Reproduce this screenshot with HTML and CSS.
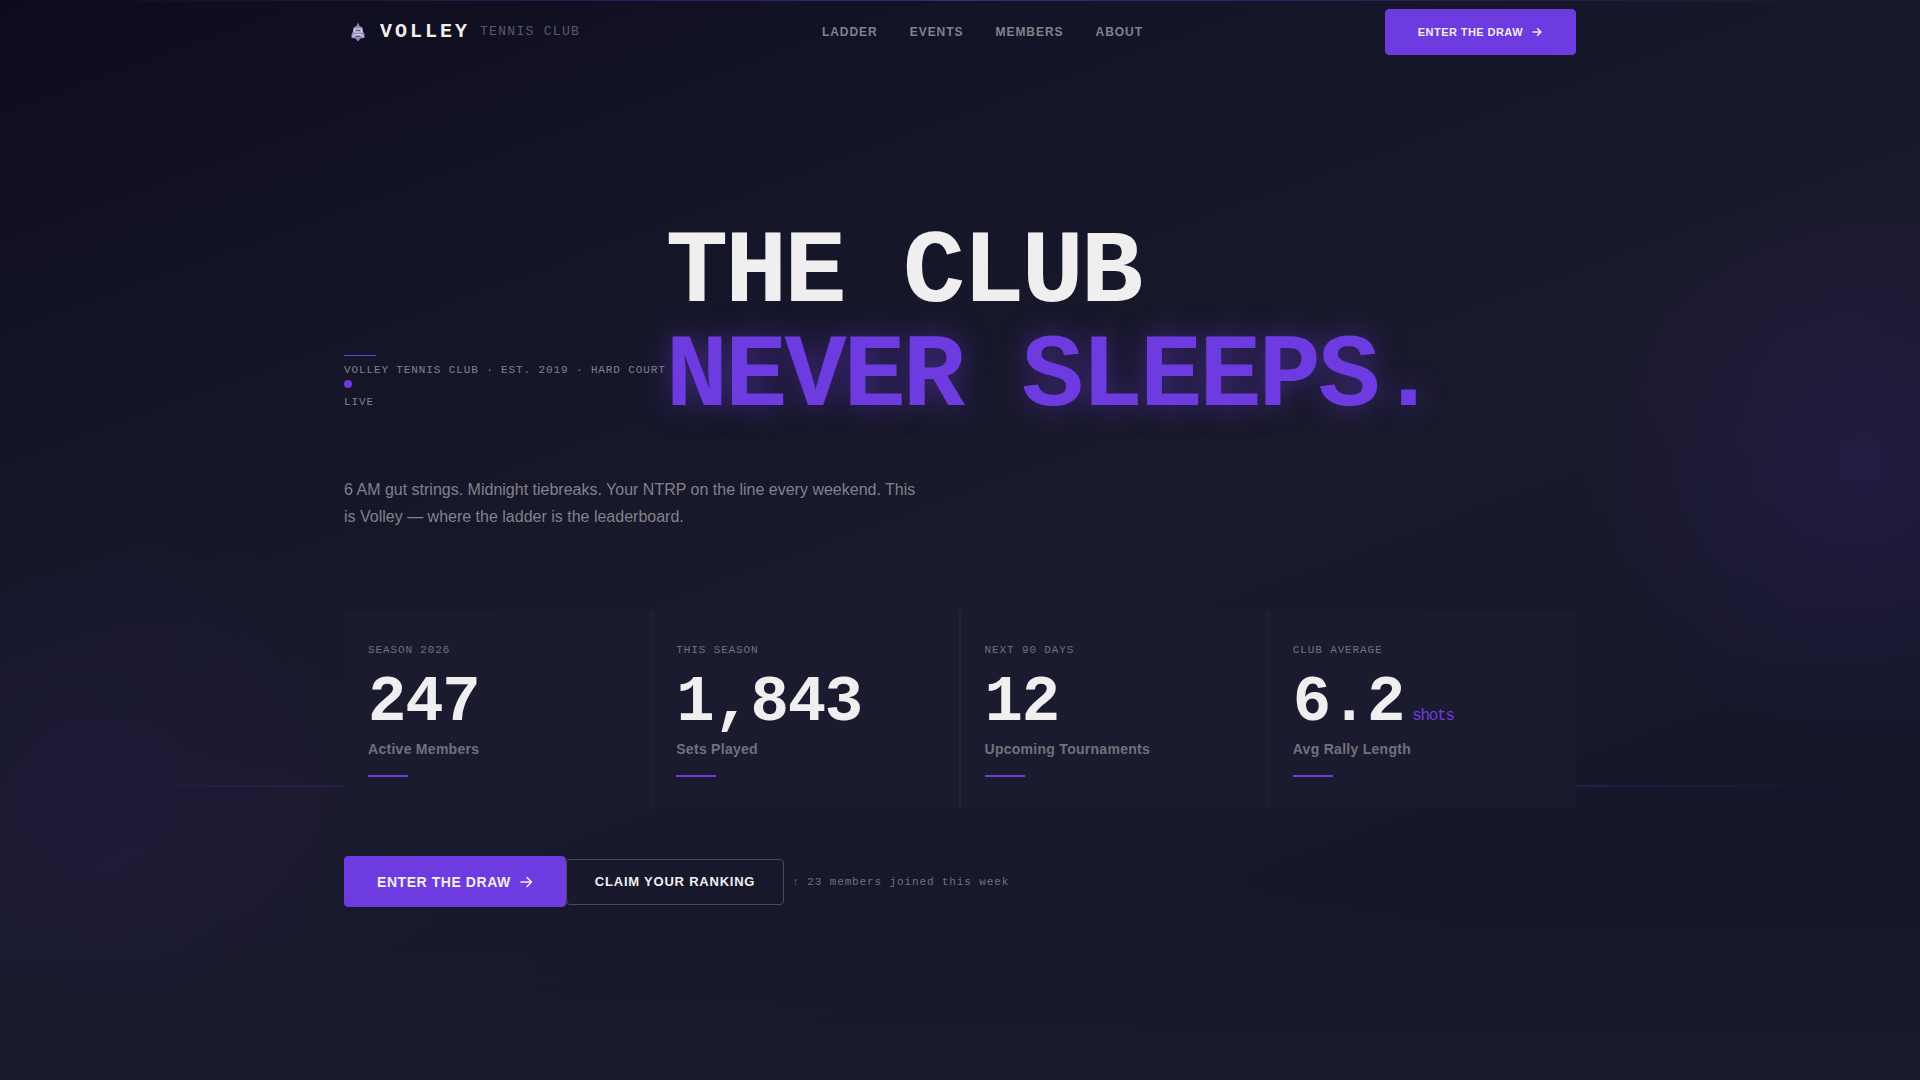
FILE: index.html
```html
<!DOCTYPE html>
<html lang="en">
<head>
<meta charset="utf-8">
<meta name="viewport" content="width=device-width, initial-scale=1">
<title>Volley Tennis Club</title>
<link rel="stylesheet" href="styles.css">
</head>
<body>
<div class="backdrop" aria-hidden="true"></div>
<header class="nav container">
  <a class="brand" href="#">
    <svg class="brand-mark" viewBox="0 0 28 28" aria-hidden="true">
      <path d="M14 4.500 L15.500 8 L18.500 9.500 L19 13.500 L20.500 16 V20 L16.500 20.500 L14 23.500 L11.500 20.500 L7.500 20 V16 L9 13.500 L9.500 9.500 L12.500 8 Z" fill="#8f89b8"/>
      <path d="M10.500 11 H17.500 L18 14 H10 Z M8.500 18.500 L11.500 16.500 H16.500 L19.500 18.500" fill="none" stroke="#dedbf0" stroke-width="1.200"/>
      <path d="M12 12.500 H16 M12.500 18.500 H15.500" fill="none" stroke="#5a5488" stroke-width="1"/>
    </svg>
    <span class="brand-name">VOLLEY</span>
    <span class="brand-sub">TENNIS CLUB</span>
  </a>
  <nav class="links" aria-label="Main">
    <a href="#ladder">LADDER</a>
    <a href="#events">EVENTS</a>
    <a href="#members">MEMBERS</a>
    <a href="#about">ABOUT</a>
  </nav>
  <button class="btn btn-primary btn-small" type="button">ENTER THE DRAW
    <svg class="arrow" width="12" height="12" viewBox="0 0 12 12" aria-hidden="true"><path d="M2 6 H10 M6.500 2.700 L10 6 L6.500 9.300"/></svg>
  </button>
</header>
<main class="hero container">
  <div class="headline">
    <div class="eyebrow">
      <span class="rule"></span>
      <span>VOLLEY TENNIS CLUB · EST. 2019 · HARD COURT</span>
      <span class="dot"></span>
      <span>LIVE</span>
    </div>
    <h1>THE CLUB<br><span class="glow">NEVER SLEEPS.</span></h1>
  </div>
  <p class="lead">6 AM gut strings. Midnight tiebreaks. Your NTRP on the line every weekend. This is Volley — where the ladder is the leaderboard.</p>
  <section class="stats" aria-label="Club statistics">
    <article class="stat">
      <p class="stat-tag">SEASON 2026</p>
      <p class="stat-value">247</p>
      <p class="stat-name">Active Members</p>
    </article>
    <article class="stat stat-divided">
      <p class="stat-tag">THIS SEASON</p>
      <p class="stat-value">1,843</p>
      <p class="stat-name">Sets Played</p>
    </article>
    <article class="stat">
      <p class="stat-tag">NEXT 90 DAYS</p>
      <p class="stat-value">12</p>
      <p class="stat-name">Upcoming Tournaments</p>
    </article>
    <article class="stat">
      <p class="stat-tag">CLUB AVERAGE</p>
      <p class="stat-value">6.2<span class="unit">shots</span></p>
      <p class="stat-name">Avg Rally Length</p>
    </article>
  </section>
  <div class="actions">
    <button class="btn btn-primary btn-large" type="button">ENTER THE DRAW
      <svg class="arrow" width="14" height="14" viewBox="0 0 14 14" aria-hidden="true"><path d="M2 7 H12.500 M8 2.500 L12.500 7 L8 11.500"/></svg>
    </button>
    <button class="btn btn-outline" type="button">CLAIM YOUR RANKING</button>
    <span class="joined">↑ 23 members joined this week</span>
  </div>
</main>
</body>
</html>
```

FILE: styles.css
```css
:root {
  --accent: #6d3be0;
  --text: #f0eeee;
  --muted: #82818c;
  --dim: #72717d;
  --sans: "Liberation Sans", Arial, sans-serif;
  --mono: "Liberation Mono", "Courier New", monospace;
}

* { box-sizing: border-box; margin: 0; }

body {
  position: relative;
  min-height: 100vh;
  background: linear-gradient(160deg, #0e0b1c 0%, #131427 22%, #1a1a2d 52%, #15162a 82%, #15162a 100%);
  color: var(--text);
  font-family: var(--sans);
}

/* Ambient glows and court lines behind the content */
.backdrop {
  position: absolute;
  inset: 0;
  z-index: -1;
  background:
    linear-gradient(90deg, transparent, #6d3be077, transparent) top / 100% 1px no-repeat,
    linear-gradient(90deg, transparent 5%, #6d3be030 20%, #6d3be030 80%, transparent 97%) 0 785px / 100% 2px no-repeat,
    linear-gradient(0deg, #1a1a2e, transparent) bottom / 100% 200px no-repeat,
    radial-gradient(circle at 97% 43%, #6d3be01e, transparent 280px),
    radial-gradient(circle at 5% 74%, #6d3be010, transparent 300px);
}

.container {
  max-width: 1280px;
  margin: 0 auto;
  padding: 0 24px;
}

.nav {
  display: flex;
  align-items: center;
  justify-content: space-between;
  height: 64px;
}

.brand {
  display: flex;
  align-items: center;
  gap: 8px;
  color: inherit;
  text-decoration: none;
  font-family: var(--mono);
}

.brand-mark { width: 28px; height: 28px; }

.brand-name {
  padding-bottom: 2px;
  font-size: 20px;
  font-weight: 700;
  letter-spacing: 3px;
}

.brand-sub {
  padding: 0 0 2px 2px;
  color: #5a596a;
  font-size: 13px;
  letter-spacing: 0.1em;
}

.links { display: flex; gap: 32px; }

.links a {
  color: var(--muted);
  font-size: 12px;
  font-weight: 700;
  letter-spacing: 0.08em;
  text-decoration: none;
}

.btn {
  display: inline-flex;
  align-items: center;
  gap: 8px;
  border: 1px solid var(--accent);
  border-radius: 4px;
  color: var(--text);
  font-family: inherit;
  font-weight: 700;
  letter-spacing: 0.04em;
  white-space: nowrap;
  cursor: pointer;
}

.btn-primary {
  padding: 0 32px;
  background: var(--accent);
}

.btn-small {
  height: 46px;
  font-size: 11px;
}

.btn-large {
  height: 51px;
  font-size: 14px;
}

.btn-outline {
  height: 46px;
  padding: 0 28px;
  border-color: #4a4a5b;
  background: transparent;
  font-size: 13px;
  letter-spacing: 0.06em;
}

.arrow {
  fill: none;
  stroke: currentColor;
  stroke-width: 1.5;
  stroke-linecap: round;
  stroke-linejoin: round;
}

.hero { padding-top: 157px; padding-bottom: 96px; }

.headline { display: flex; align-items: last baseline; }

.eyebrow {
  display: flex;
  flex-direction: column;
  color: var(--muted);
  font-family: var(--mono);
  font-size: 11px;
  line-height: 20px;
  letter-spacing: 0.08em;
  white-space: nowrap;
}

.rule {
  width: 32px;
  height: 1px;
  margin-bottom: 4px;
  background: var(--accent);
}

.dot {
  width: 8px;
  height: 8px;
  margin-bottom: 4px;
  border-radius: 50%;
  background: var(--accent);
}

h1 {
  font-family: var(--mono);
  font-size: 104px;
  line-height: 104px;
  font-weight: 700;
  letter-spacing: -0.03em;
  white-space: nowrap;
}

.glow {
  color: var(--accent);
  text-shadow: 0 0 28px #6d3be080;
}

.lead {
  max-width: 580px;
  margin-top: 47px;
  color: var(--muted);
  font-size: 16px;
  line-height: 27px;
}

.stats {
  display: grid;
  grid-template-columns: repeat(4, 1fr);
  gap: 1px;
  margin-top: 80px;
  background: #232338;
}

.stat {
  padding: 32px 24px 31px;
  background: #1b1b2f;
}

.stat-divided { border-right: 1px solid #232338; }

.stat::after {
  content: "";
  display: block;
  width: 40px;
  height: 2px;
  margin-top: 16px;
  background: var(--accent);
}

.stat-tag {
  color: var(--dim);
  font-family: var(--mono);
  font-size: 11px;
  line-height: 16px;
  letter-spacing: 0.08em;
}

.stat-value {
  margin-top: 13px;
  font-family: var(--mono);
  font-size: 64px;
  line-height: 64px;
  font-weight: 700;
  letter-spacing: -0.02em;
}

.unit {
  margin-left: 8px;
  color: var(--accent);
  font-size: 16px;
  line-height: 16px;
  font-weight: 400;
}

.stat-name {
  margin-top: 4px;
  color: var(--dim);
  font-size: 14px;
  line-height: 20px;
  font-weight: 700;
  letter-spacing: 0.02em;
}

.actions {
  display: flex;
  align-items: center;
  margin-top: 48px;
}

.joined {
  margin-left: 8px;
  color: var(--dim);
  font-family: var(--mono);
  font-size: 11px;
  letter-spacing: 0.08em;
}
```
